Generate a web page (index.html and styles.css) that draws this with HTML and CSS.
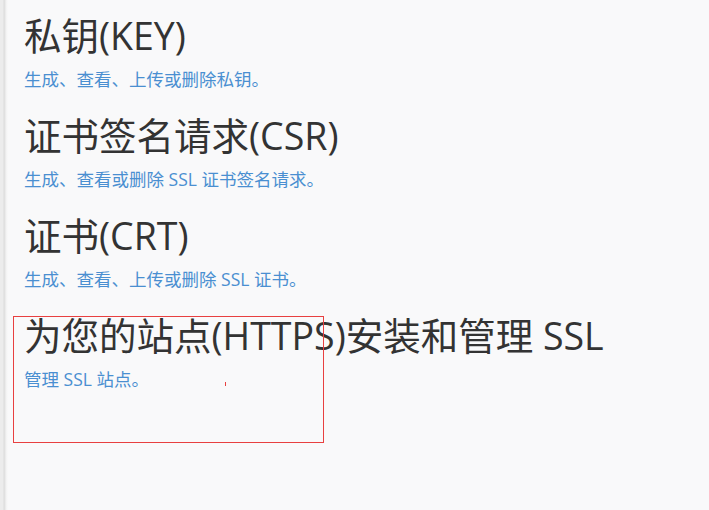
FILE: index.html
```html
<!DOCTYPE html>
<html lang="zh-CN">
<head>
<meta charset="utf-8">
<title>SSL/TLS</title>
<link rel="stylesheet" href="styles.css">
</head>
<body>
<div class="page">
  <section class="item">
    <h2 class="title">私钥(KEY)</h2>
    <p class="desc">生成、查看、上传或删除私钥。</p>
  </section>
  <section class="item">
    <h2 class="title">证书签名请求(CSR)</h2>
    <p class="desc">生成、查看或删除 SSL 证书签名请求。</p>
  </section>
  <section class="item">
    <h2 class="title">证书(CRT)</h2>
    <p class="desc">生成、查看、上传或删除 SSL 证书。</p>
  </section>
  <section class="item">
    <h2 class="title">为您的站点(HTTPS)安装和管理 SSL</h2>
    <p class="desc">管理 SSL 站点。</p>
  </section>
  <div class="highlight"></div>
  <div class="marker"></div>
</div>
</body>
</html>
```

FILE: styles.css
```css
html, body {
  margin: 0;
  padding: 0;
  height: 100%;
}
body {
  background: #f9f9fa;
  font-family: "Open Sans", "Noto Sans CJK SC", sans-serif;
}
.page {
  position: relative;
  min-height: 100%;
  box-sizing: border-box;
  padding: 14px 0 0 24px;
  background: linear-gradient(to right, #ececec 0, #ececec 3px, #dcdcdc 4px, #e4e4e4 5px, #f2f2f2 6px, #f9f9fa 8px);
}
.item {
  margin-bottom: 24px;
}
.title {
  margin: 0;
  font-weight: normal;
  font-size: 37.5px;
  line-height: 44px;
  color: #333333;
}
.desc {
  margin: 10px 0 0 0;
  font-size: 17.5px;
  line-height: 22px;
  color: #4a8fd1;
}
.highlight {
  position: absolute;
  left: 13px;
  top: 316px;
  width: 309px;
  height: 125px;
  border: 1px solid #e84040;
}
.marker {
  position: absolute;
  left: 225px;
  top: 382px;
  width: 1px;
  height: 4px;
  background: #e84040;
}
```
